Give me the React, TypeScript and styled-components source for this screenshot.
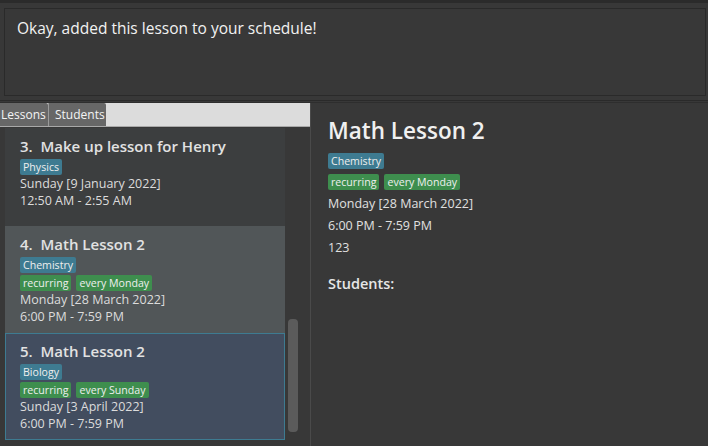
import React from "react";
import styled, { createGlobalStyle } from "styled-components";

const Global = createGlobalStyle`
  html, body { margin: 0; padding: 0; background: #383838; }
  body { font-family: "Open Sans", "Noto Sans", sans-serif; }
  * { box-sizing: border-box; }
`;

const Page = styled.div`
  width: 708px;
  height: 446px;
  background: #383838;
  display: flex;
  flex-direction: column;
  overflow: hidden;
`;

const TopStrip = styled.div`
  height: 3px;
  background: #2b2b2b;
  flex: none;
`;

const ResultArea = styled.div`
  padding: 5px 2px 0 4px;
  flex: none;
`;

const ResultBox = styled.div`
  height: 88px;
  border: 1px solid #2a2a2a;
  background: #383838;
  padding: 8px 12px;
  color: #f2f2f2;
  font-size: 15.5px;
  line-height: 22px;
`;

const Splitter = styled.div`
  height: 7px;
  flex: none;
  border-bottom: 1px solid #2e2e2e;
  display: flex;
  flex-direction: column;
  justify-content: center;
  &::before {
    content: "";
    display: block;
    height: 1px;
    background: #2a2a2a;
    margin-top: 3px;
  }
`;

const Main = styled.div`
  flex: 1;
  display: flex;
  min-height: 0;
`;

const LessonPanel = styled.div`
  width: 310px;
  flex: none;
  display: flex;
  flex-direction: column;
`;

const TabBar = styled.div`
  height: 24px;
  background: #dcdcdc;
  border-bottom: 1px solid #a9a9a9;
  display: flex;
  flex: none;
`;

const Tab = styled.div<{ $w: number }>`
  width: ${(p) => p.$w}px;
  background: #676767;
  color: #f4f4f4;
  font-size: 12px;
  line-height: 23px;
  padding-left: ${(p) => (p.$w < 50 ? 1 : 6)}px;
  white-space: nowrap;
  overflow: hidden;
  border-top-right-radius: 2px;
  & + & {
    border-left: 1px solid #9a9a9a;
  }
`;

const ListArea = styled.div`
  flex: 1;
  display: flex;
  min-height: 0;
  padding-top: 1px;
`;

const List = styled.div`
  width: 285px;
  padding-left: 5px;
  display: flex;
  flex-direction: column;
`;

const Card = styled.div<{ $variant: "even" | "odd" | "selected"; $extra?: boolean }>`
  background: ${(p) =>
    p.$variant === "even" ? "#3c3e3f" : p.$variant === "odd" ? "#515658" : "#424d5f"};
  border: 1px solid ${(p) => (p.$variant === "selected" ? "#3e7b91" : "transparent")};
  padding: 7px 14px ${(p) => (p.$extra ? 16 : 7)}px;
  color: #dedede;
  display: flex;
  flex-direction: column;
`;

const CardTitle = styled.div`
  font-size: 15px;
  font-weight: 600;
  line-height: 20px;
  color: #e2e2e2;
  white-space: pre;
  margin-bottom: 3px;
`;

const TagRow = styled.div`
  display: flex;
  gap: 5px;
  & + & {
    margin-top: 2px;
  }
`;

const Tag = styled.span<{ $kind: "subject" | "recur" }>`
  background: ${(p) => (p.$kind === "subject" ? "#3e7b91" : "#3e8e4e")};
  color: #eeeeee;
  font-size: 10.6px;
  line-height: 16px;
  height: 16px;
  padding: 0 3px;
  border-radius: 2px;
  white-space: nowrap;
`;

const CardLine = styled.div`
  font-size: 12.5px;
  line-height: 17px;
  color: #dcdcdc;
`;

const ScrollTrack = styled.div`
  width: 25px;
  padding-left: 3px;
  display: flex;
  flex-direction: column;
`;

const Thumb = styled.div`
  width: 10px;
  height: 113px;
  border-radius: 4px;
  background: #5b5b5b;
`;

const Divider = styled.div`
  width: 1px;
  flex: none;
  background: #4a4a4a;
`;

const DetailPanel = styled.div`
  flex: 1;
  padding: 14px 17px;
  color: #e0e0e0;
  display: flex;
  flex-direction: column;
  align-items: flex-start;
`;

const DetailTitle = styled.div`
  font-size: 22.5px;
  font-weight: 600;
  line-height: 28px;
  color: #f0f0f0;
  margin-bottom: 8px;
`;

const DetailTags = styled.div`
  display: flex;
  gap: 5px;
  margin-bottom: 5px;
  & + & {
    margin-bottom: 3px;
  }
`;

const DetailLine = styled.div`
  font-size: 12.5px;
  line-height: 22px;
  color: #e0e0e0;
`;

const StudentsHeading = styled.div`
  font-size: 14.5px;
  font-weight: 600;
  line-height: 22px;
  margin-top: 14px;
  color: #e6e6e6;
`;

type Lesson = {
  n: number;
  title: string;
  subject: string;
  recur: string[];
  date: string;
  time: string;
  variant: "even" | "odd" | "selected";
};

const lessons: Lesson[] = [
  { n: 3, title: "Make up lesson for Henry", subject: "Physics", recur: [], date: "Sunday [9 January 2022]", time: "12:50 AM - 2:55 AM", variant: "even" },
  { n: 4, title: "Math Lesson 2", subject: "Chemistry", recur: ["recurring", "every Monday"], date: "Monday [28 March 2022]", time: "6:00 PM - 7:59 PM", variant: "odd" },
  { n: 5, title: "Math Lesson 2", subject: "Biology", recur: ["recurring", "every Sunday"], date: "Sunday [3 April 2022]", time: "6:00 PM - 7:59 PM", variant: "selected" },
];

export default function App() {
  const thumbOffset = 191;
  return (
    <Page>
      <Global />
      <TopStrip />
      <ResultArea>
        <ResultBox>Okay, added this lesson to your schedule!</ResultBox>
      </ResultArea>
      <Splitter />
      <Main>
        <LessonPanel>
          <TabBar>
            <Tab $w={48}>Lessons</Tab>
            <Tab $w={58}>Students</Tab>
          </TabBar>
          <ListArea>
            <List>
              {lessons.map((l) => (
                <Card key={l.n} $variant={l.variant} $extra={l.recur.length === 0}>
                  <CardTitle>{`${l.n}.  ${l.title}`}</CardTitle>
                  <TagRow>
                    <Tag $kind="subject">{l.subject}</Tag>
                  </TagRow>
                  {l.recur.length > 0 && (
                    <TagRow>
                      {l.recur.map((r) => (
                        <Tag key={r} $kind="recur">{r}</Tag>
                      ))}
                    </TagRow>
                  )}
                  <CardLine>{l.date}</CardLine>
                  <CardLine>{l.time}</CardLine>
                </Card>
              ))}
            </List>
            <ScrollTrack>
              <Thumb style={{ marginTop: thumbOffset }} />
            </ScrollTrack>
          </ListArea>
        </LessonPanel>
        <Divider />
        <DetailPanel>
          <DetailTitle>Math Lesson 2</DetailTitle>
          <DetailTags>
            <Tag $kind="subject">Chemistry</Tag>
          </DetailTags>
          <DetailTags>
            <Tag $kind="recur">recurring</Tag>
            <Tag $kind="recur">every Monday</Tag>
          </DetailTags>
          <DetailLine>Monday [28 March 2022]</DetailLine>
          <DetailLine>6:00 PM - 7:59 PM</DetailLine>
          <DetailLine>123</DetailLine>
          <StudentsHeading>Students:</StudentsHeading>
        </DetailPanel>
      </Main>
    </Page>
  );
}
